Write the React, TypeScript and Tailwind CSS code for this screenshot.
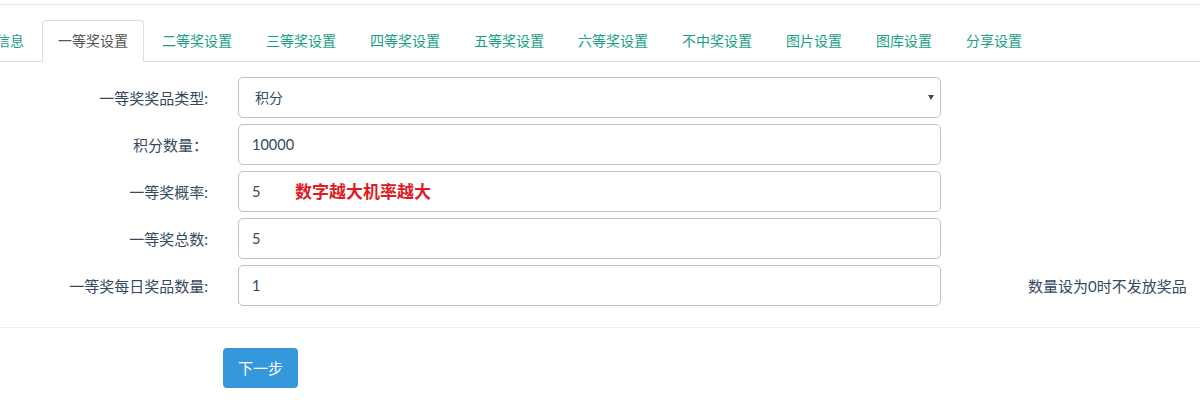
import React from "react";

const tabs = [
  "基本信息",
  "一等奖设置",
  "二等奖设置",
  "三等奖设置",
  "四等奖设置",
  "五等奖设置",
  "六等奖设置",
  "不中奖设置",
  "图片设置",
  "图库设置",
  "分享设置",
];

const font = { fontFamily: 'Lato, "Noto Sans CJK SC", sans-serif' };

function Row({
  label,
  children,
  note,
}: {
  label: string;
  children: React.ReactNode;
  note?: string;
}) {
  return (
    <div className="flex items-center h-[41px]">
      <div className="w-[208px] text-right text-[15px] text-[#34495e] leading-[20px]">{label}</div>
      <div className="ml-[30px] w-[703px] h-[41px] relative">{children}</div>
      {note && <div className="ml-[87px] text-[15px] text-[#34495e] leading-[20px]">{note}</div>}
    </div>
  );
}

function Field({ value, extra }: { value: string; extra?: React.ReactNode }) {
  return (
    <div className="w-full h-full border border-[#bdc3c7] rounded-[5px] flex items-center pl-[13px] text-[14.5px] text-[#34495e] relative">
      {value}
      {extra}
    </div>
  );
}

export default function App() {
  return (
    <div className="w-[1200px] h-[400px] bg-white overflow-hidden" style={font}>
      <div className="mt-[4px] border-t border-[#e5e5e5] pt-[15px]">
        <ul className="flex border-b border-[#ddd] h-[42px]">
          {tabs.map((t, i) => {
            const active = i === 1;
            return (
              <li
                key={t}
                className={`${i === 0 ? "ml-[-48px]" : ""} mr-[2px] mb-[-1px]`}
              >
                <div
                  className={`px-[15px] py-[10px] leading-[20px] text-[14px] border rounded-t-[4px] whitespace-nowrap ${
                    active
                      ? "border-[#ddd] border-b-white bg-white text-[#555]"
                      : "border-transparent text-[#16a085]"
                  }`}
                >
                  {t}
                </div>
              </li>
            );
          })}
        </ul>
      </div>

      <div className="mt-[15px] flex flex-col gap-[6px]">
        <Row label="一等奖奖品类型:">
          <div className="w-full h-full border border-[#bdc3c7] rounded-[5px] flex items-center pl-[16px] pr-[6px] text-[14px] text-[#34495e]">
            <span className="flex-1">积分</span>
            <svg width="6" height="5" viewBox="0 0 6 5" className="mb-[1px]">
              <path d="M0 0 H6 L3 5 Z" fill="#34495e" />
            </svg>
          </div>
        </Row>
        <Row label="积分数量：">
          <Field value="10000" />
        </Row>
        <Row label="一等奖概率:">
          <Field
            value="5"
            extra={
              <span className="absolute left-[56px] top-1/2 -translate-y-1/2 text-[17px] font-bold text-[#dd1d25] whitespace-nowrap">
                数字越大机率越大
              </span>
            }
          />
        </Row>
        <Row label="一等奖总数:">
          <Field value="5" />
        </Row>
        <Row label="一等奖每日奖品数量:" note="数量设为0时不发放奖品">
          <Field value="1" />
        </Row>
      </div>

      <div className="mt-[21px] border-t border-[#eee]" />

      <div className="mt-[20px] ml-[223px]">
        <button className="w-[75px] h-[40px] bg-[#3498db] rounded-[4px] text-white text-[15px]">
          下一步
        </button>
      </div>
    </div>
  );
}
